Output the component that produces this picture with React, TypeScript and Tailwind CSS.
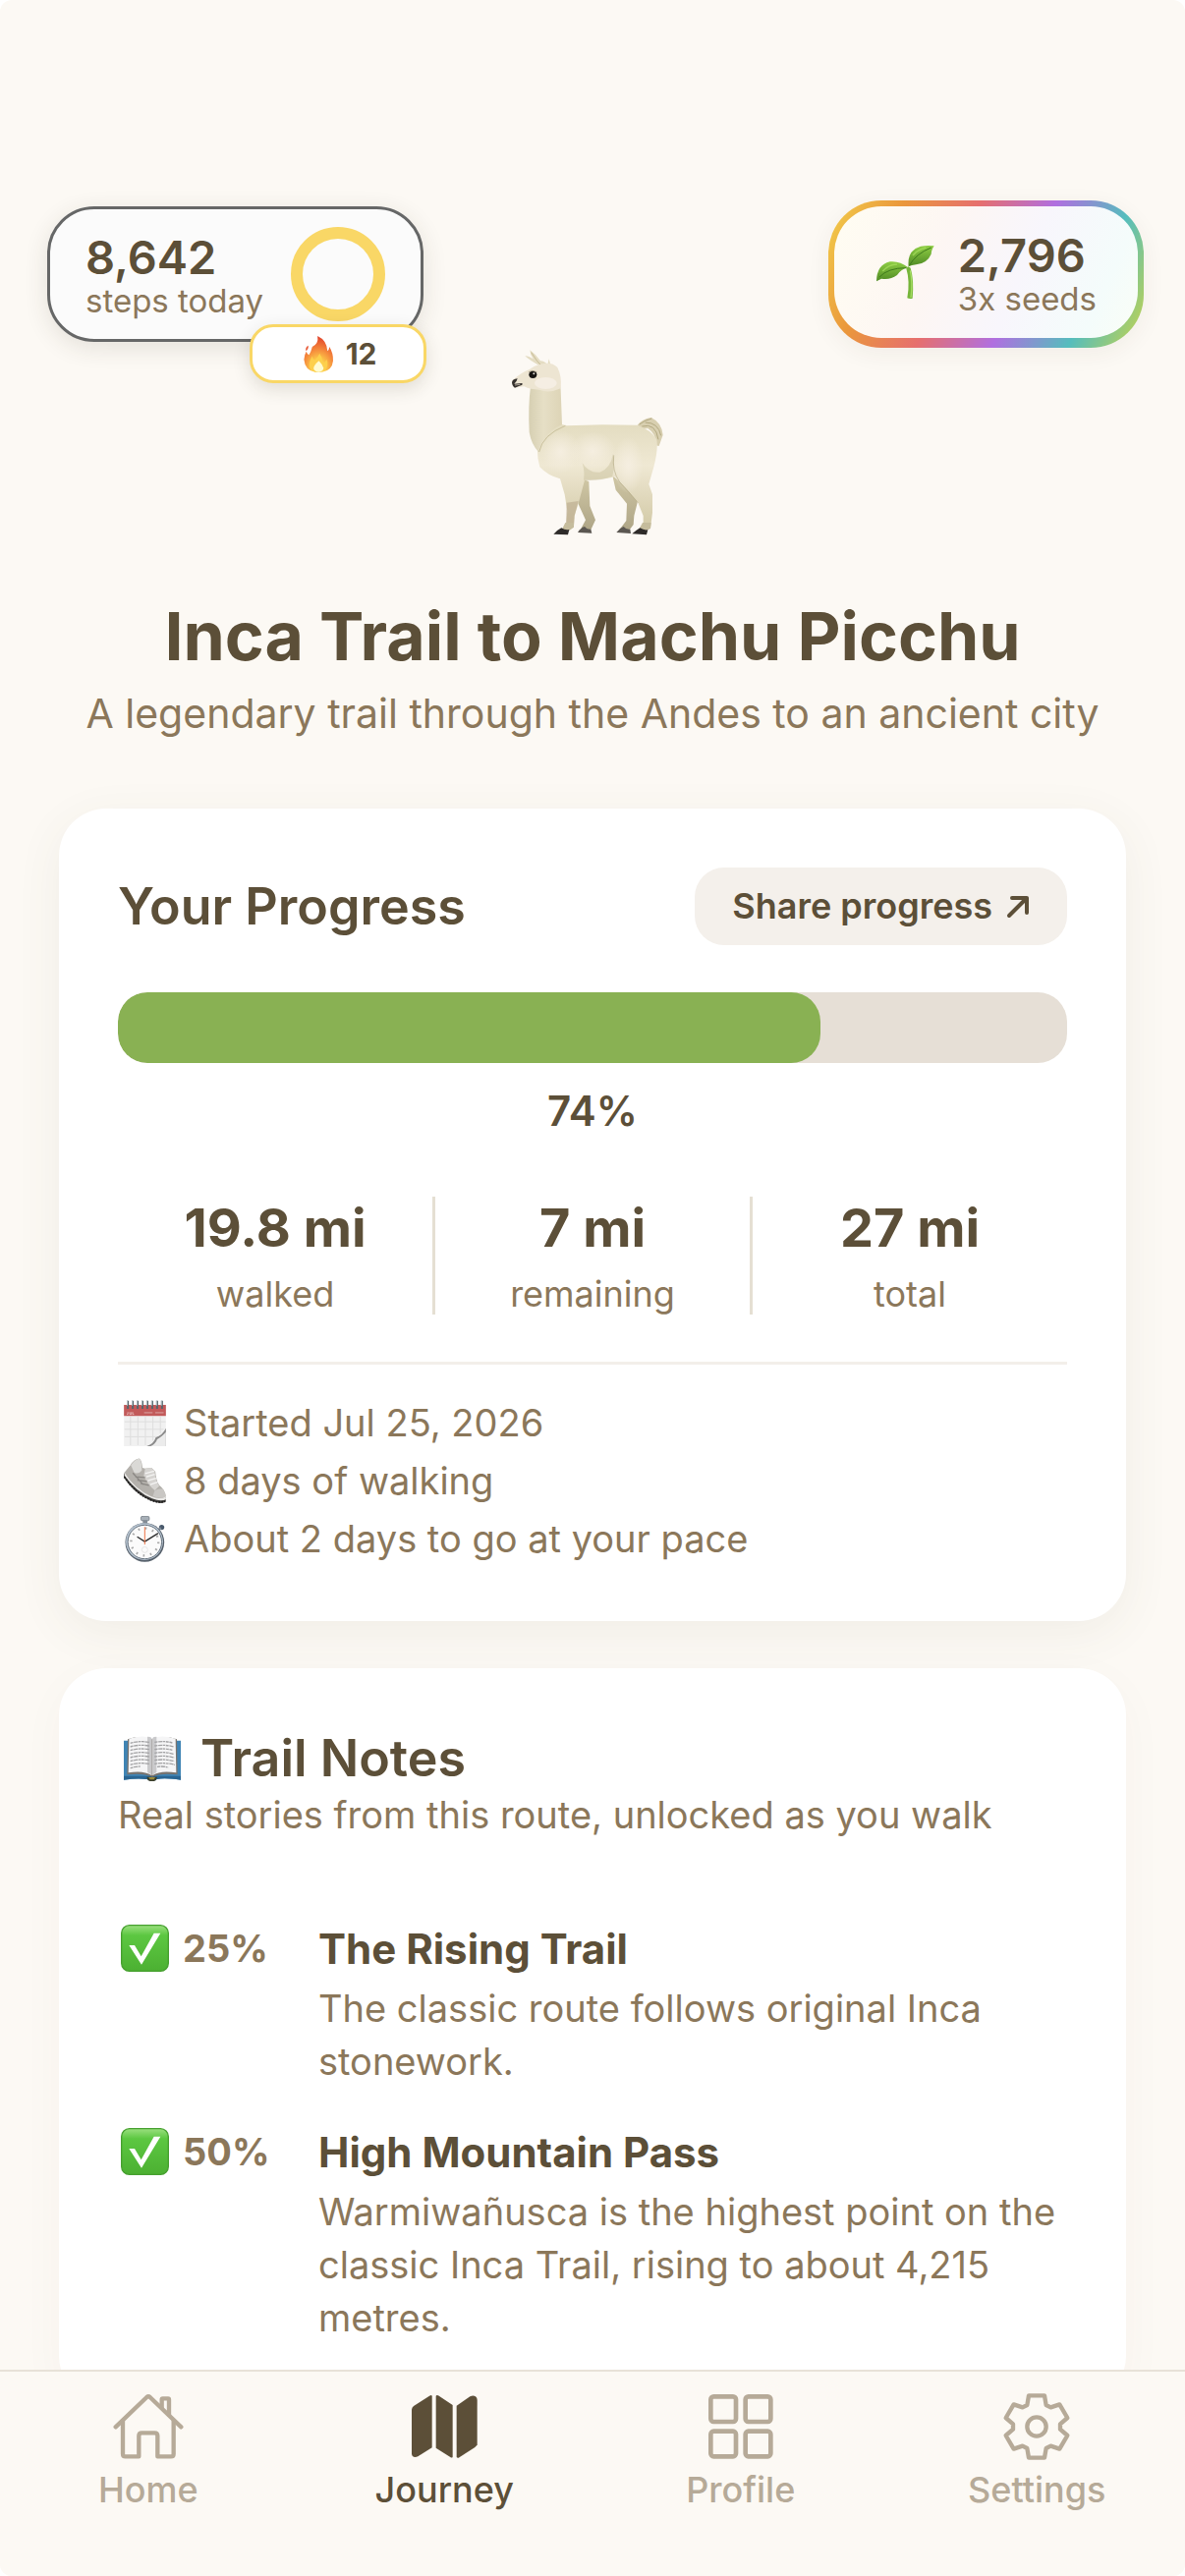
import type { ReactNode } from "react"

function Llama() {
  return (
    <svg width="166" height="193" viewBox="120 72 498 579" role="img" aria-label="Llama">
      <defs>
        <linearGradient id="llamaBody" x1="0" y1="0" x2="0" y2="1">
          <stop offset="0" stopColor="#e3dcc0" />
          <stop offset="0.4" stopColor="#efe8d3" />
          <stop offset="1" stopColor="#d2c9a6" />
        </linearGradient>
        <linearGradient id="llamaNeck" x1="0" y1="0" x2="1" y2="0">
          <stop offset="0" stopColor="#d6cfb2" />
          <stop offset="0.45" stopColor="#e6dfc6" />
          <stop offset="1" stopColor="#ddd4b6" />
        </linearGradient>
        <linearGradient id="llamaLeg" x1="0" y1="0" x2="0" y2="1">
          <stop offset="0" stopColor="#d0c7a5" />
          <stop offset="1" stopColor="#aea586" />
        </linearGradient>
        <radialGradient id="llamaGlow">
          <stop offset="0" stopColor="#f5eee0" />
          <stop offset="1" stopColor="#f5eee0" stopOpacity="0" />
        </radialGradient>
      </defs>
      {/* far legs */}
      <path d="M330 470 L358 480 L361 555 L378 598 L364 628 L334 624 L348 598 L324 545Z" fill="url(#llamaLeg)" />
      <path d="M430 462 L500 520 L506 545 L496 585 L494 612 L482 628 L452 626 L472 600 L474 548 L440 506Z" fill="url(#llamaLeg)" />
      <path d="M324 636 Q332 622 345 618 Q352 628 364 626 L367 638Z" fill="#5b5751" />
      <path d="M442 636 Q452 622 464 618 Q472 628 484 626 L486 639Z" fill="#5b5751" />
      {/* tail */}
      <path d="M506 308 Q520 290 548 285 Q580 300 584 338 L572 372 L562 370 Q566 336 538 318 L520 320Z" fill="#d8cfb0" />
      <path d="M512 306 Q530 292 550 288 M520 312 Q562 300 570 352 M530 300 Q570 300 578 340" stroke="#b3a981" strokeWidth="3" fill="none" />
      {/* body */}
      <path
        d="M262 302 L290 310 L400 307 L505 308 Q548 322 565 352 Q570 382 556 436 L541 488 L552 520 L552 575 L546 622 L524 620 L524 585 L508 545 L470 500 L438 466 Q398 476 345 476 L328 540 L314 585 L312 616 L288 622 L292 570 L284 520 L270 472 Q232 462 208 436 Q196 396 204 352 Q226 316 262 302Z"
        fill="url(#llamaBody)"
      />
      <ellipse cx="370" cy="388" rx="70" ry="60" fill="url(#llamaGlow)" />
      <ellipse cx="478" cy="430" rx="46" ry="86" fill="url(#llamaGlow)" />
      <ellipse cx="272" cy="390" rx="60" ry="66" fill="url(#llamaGlow)" />
      <path d="M338 424 Q346 450 342 476 Q392 480 430 464 Q438 430 432 396 Q424 440 392 452 Q358 456 338 424Z" fill="#bdb48d" opacity="0.35" />
      <path d="M434 400 Q428 448 452 482 Q480 512 508 545" stroke="#aaa078" strokeWidth="3" fill="none" opacity="0.5" />
      <path d="M290 545 L326 540 L314 585 L312 616 L288 622Z" fill="#b9a98c" opacity="0.6" />
      {/* neck */}
      <path d="M180 190 Q172 250 176 330 Q182 366 204 390 Q214 336 276 306 L272 200 L266 150Z" fill="url(#llamaNeck)" />
      <path d="M206 390 Q216 338 286 310" stroke="#c9c09c" strokeWidth="3" fill="none" />
      {/* ears */}
      <path d="M206 126 Q174 108 163 97 Q172 96 188 106 Q178 92 178 79 Q196 92 210 112 Q222 112 232 124 L236 106 L242 128 L236 146Z" fill="#e4dcc2" />
      <path d="M182 86 Q196 112 224 138" stroke="#c8bd96" strokeWidth="3" fill="none" />
      {/* head */}
      <path d="M192 128 Q240 108 262 132 Q276 160 272 196 Q238 212 205 200 Q180 200 160 190 L130 194 Q120 184 124 172 Q150 148 176 138Z" fill="#ede5d2" />
      <ellipse cx="226" cy="180" rx="34" ry="18" fill="#f5eee3" />
      <path d="M123 178 Q124 168 140 166 Q138 176 130 182 L154 180 Q158 186 146 188 L132 194 Q124 190 123 178Z" fill="#35312e" />
      <path d="M132 186 L148 184" stroke="#a89f92" strokeWidth="3" />
      <ellipse cx="187" cy="154" rx="12" ry="11" fill="#151311" />
      <circle cx="190" cy="151" r="3" fill="#ddd8d0" />
      <path d="M174 146 Q184 138 199 146" stroke="#8d846b" strokeWidth="2" fill="none" />
      {/* near hooves */}
      <path d="M286 606 L312 606 L312 620 L298 630 L276 626Z M522 606 L548 606 L546 624 L534 630 L512 624Z" fill="#c5bc9c" />
      <path d="M250 641 Q262 628 274 622 Q286 630 298 627 L294 643Z M490 640 Q504 628 514 622 Q526 630 538 628 L534 643Z" fill="#2e2b29" />
    </svg>
  )
}

function Flame() {
  return (
    <svg width="35" height="39" viewBox="820 452 104 116" aria-hidden="true">
      <defs>
        <radialGradient id="flame" cx="0.5" cy="0.88" r="0.85">
          <stop offset="0" stopColor="#fff27a" />
          <stop offset="0.3" stopColor="#fcc648" />
          <stop offset="0.6" stopColor="#f58a3c" />
          <stop offset="1" stopColor="#e2452c" />
        </radialGradient>
      </defs>
      <path
        d="M874 455 Q902 468 904 500 Q909 498 910 488 Q922 508 921 530 Q918 560 888 564 L866 564 Q836 558 833 526 Q834 512 840 502 Q842 510 848 512 Q854 504 858 488 Q878 478 874 455Z"
        fill="url(#flame)"
      />
      <path d="M846 484 Q836 490 839 500 Q847 496 846 484Z" fill="#e85a38" />
      <path d="M880 508 Q876 520 866 528 Q858 524 858 516 Q846 536 850 550 Q856 564 876 564 Q900 562 904 544 Q905 534 902 526 Q896 536 890 536 Q888 518 880 508Z" fill="#fdd04c" />
      <path d="M878 530 Q862 544 862 554 Q866 564 878 564 Q892 562 892 552 Q890 542 878 530Z" fill="#fffbd0" />
    </svg>
  )
}

function Sprout() {
  return (
    <svg width="60" height="56" viewBox="218 183 180 168" role="img" aria-label="Seedling">
      <defs>
        <linearGradient id="leaf" x1="0" y1="0" x2="0" y2="1">
          <stop offset="0" stopColor="#8fce45" />
          <stop offset="1" stopColor="#4f8a24" />
        </linearGradient>
      </defs>
      <path d="M318 250 L325 254 Q336 290 331 347 Q322 350 315 346 Q324 296 312 256Z" fill="#76b53a" />
      <path d="M324 262 Q332 300 326 345" stroke="#a5dd62" strokeWidth="4" fill="none" />
      <path d="M221 295 Q222 244 262 235 Q292 232 318 253 Q296 258 284 276 Q262 292 236 287Z" fill="url(#leaf)" />
      <path d="M319 250 Q314 200 356 188 Q378 184 397 187 Q388 200 388 212 Q376 240 342 244 Q328 246 319 250Z" fill="url(#leaf)" />
      <path d="M230 282 Q256 254 312 254 M322 246 Q340 212 388 192" stroke="#3f7a1c" strokeWidth="3" fill="none" />
      <path d="M240 264 Q258 244 284 243 M332 216 Q346 198 372 192" stroke="#a9e060" strokeWidth="5" fill="none" opacity="0.7" />
    </svg>
  )
}

function Calendar() {
  return (
    <svg width="43" height="47" viewBox="78 41 129 142" aria-hidden="true">
      <rect x="78" y="56" width="129" height="127" fill="#f1f1f1" />
      <rect x="78" y="56" width="129" height="34" fill="#c25a5a" />
      <path d="M90 78 v7 h-3 M96 78 v7 h5 v-7 M105 78 v7 h4" stroke="#f0d8d8" strokeWidth="2" fill="none" />
      <path d="M140 80 h26 M174 80 h26" stroke="#d08584" strokeWidth="5" />
      <path d="M98 92 V180 M121 92 V180 M144 92 V180 M167 92 V166 M190 92 V144 M80 108 H206 M80 131 H200 M80 154 H176" stroke="#dedede" strokeWidth="3" />
      <path d="M207 128 Q196 150 176 156 Q170 176 148 183 H207Z" fill="#8a8a8a" />
      <path d="M207 140 Q192 156 180 162 Q176 176 160 183 H207Z" fill="#ececec" />
      <path d="M90 43 V68 M105 43 V68 M120 43 V68 M135 43 V68 M150 43 V68 M165 43 V68 M180 43 V68 M195 43 V68" stroke="#58666c" strokeWidth="6" />
      <path d="M88 42 V58 M103 42 V58 M118 42 V58 M133 42 V58 M148 42 V58 M163 42 V58 M178 42 V58 M193 42 V58" stroke="#c3ced2" strokeWidth="3" />
    </svg>
  )
}

function Shoe() {
  return (
    <svg width="43" height="47" viewBox="76 218 131 142" aria-hidden="true">
      <path d="M76 264 L76 278 Q110 328 160 350 Q190 362 206 354 L207 340Z" fill="#3f3e3c" />
      <path d="M77 260 L78 272 Q116 324 164 343 Q190 354 207 346 L206 330Z" fill="#e9e8e6" />
      <path d="M78 262 L96 240 Q106 222 124 219 Q132 224 134 248 L142 250 L162 248 L174 260 Q176 288 186 302 Q204 316 206 336 Q190 348 160 336 Q108 312 78 262Z" fill="#b4b1ac" />
      <path d="M98 240 Q108 224 124 219 Q132 228 132 256 Q120 270 108 262Z" fill="#dad9d6" />
      <path d="M142 250 L162 248 L172 260 Q174 290 186 304 L172 318 Q150 300 138 272Z" fill="#d6d4d1" />
      <path d="M172 318 Q188 312 198 314 Q206 326 206 338 Q190 346 166 336Z" fill="#c9c7c4" />
      <path d="M142 266 L170 258 M146 276 L172 268 M150 288 L176 280 M158 300 L182 292" stroke="#f4f4f3" strokeWidth="4" />
      <path d="M112 276 L142 278 M118 286 L148 290 M128 296 L154 302 M104 264 L136 300" stroke="#8b8884" strokeWidth="4" />
      <path d="M78 276 Q112 328 160 348 Q184 358 204 352" stroke="#1f1e1d" strokeWidth="5" strokeDasharray="5 4" fill="none" />
    </svg>
  )
}

function Stopwatch() {
  return (
    <svg width="43" height="47" viewBox="78 396 129 142" aria-hidden="true">
      <rect x="130" y="397" width="26" height="14" rx="5" fill="#a8b0b8" stroke="#636c75" strokeWidth="2" />
      <rect x="136" y="409" width="14" height="12" fill="#838c95" />
      <circle cx="194" cy="431" r="8" fill="#4a5a6c" />
      <path d="M180 442 L192 433" stroke="#7f8b98" strokeWidth="7" />
      <circle cx="142" cy="477" r="60" fill="#56606b" />
      <circle cx="141" cy="475" r="57" fill="#b9c6d3" />
      <circle cx="142" cy="476" r="52" fill="#fbfbfb" stroke="#66727e" strokeWidth="3" />
      <circle cx="142" cy="476" r="42" fill="none" stroke="#a9a9a9" strokeWidth="7" strokeDasharray="5 17" />
      <circle cx="142" cy="500" r="9" fill="none" stroke="#dcdcdc" strokeWidth="2" />
      <path d="M142 475 L120 461 M142 475 L182 450" stroke="#2c2c2c" strokeWidth="4" strokeLinecap="round" />
      <path d="M142 430 V484" stroke="#ec7245" strokeWidth="3" />
    </svg>
  )
}

function Book() {
  return (
    <svg width="58" height="46" viewBox="78 78 174 138" aria-hidden="true">
      <path d="M78 92 H252 V212 Q200 204 180 210 Q164 220 148 210 Q120 206 78 212Z" fill="#3f84b4" />
      <path d="M78 200 H252 V212 Q200 205 180 210 H148 Q120 206 78 212Z" fill="#2a6592" />
      <path d="M148 203 H180 Q178 217 164 217 Q150 217 148 203Z" fill="#3b3f2c" />
      <path d="M154 204 H174 L170 211 H158Z" fill="#9a8a3a" />
      <path d="M88 196 L90 88 Q128 74 164 88 Q200 74 240 88 L242 196 Q190 190 165 203 Q138 190 88 196Z" fill="#77736f" />
      <path d="M92 190 L94 86 Q136 74 163 84 V198 Q138 182 92 190Z" fill="#f5f5f6" />
      <path d="M238 190 L236 86 Q196 74 166 84 V198 Q190 182 238 190Z" fill="#f5f5f6" />
      <path d="M150 80 Q160 80 163 84 V198 Q158 192 150 189Z M178 80 Q168 80 166 84 V198 Q172 192 178 189Z" fill="#c9c9cb" />
      <path
        d="M98 100 Q124 92 156 97 M98 111 Q124 103 156 108 M98 122 Q124 114 156 119 M98 133 Q124 125 156 130 M98 144 Q124 136 156 141 M98 155 Q124 147 156 152 M98 166 Q124 158 156 163 M98 176 Q112 171 128 171 M172 97 Q204 92 226 99 M172 108 Q204 103 230 111 M172 119 Q204 114 226 121 M172 130 Q204 125 230 133 M172 141 Q204 136 232 144 M172 152 Q204 147 232 155 M172 163 Q204 158 234 166 M180 172 Q196 169 214 174"
        stroke="#a2a2a4"
        strokeWidth="4"
        strokeDasharray="9 2 13 2 6 2"
        fill="none"
      />
    </svg>
  )
}

function Check() {
  return (
    <svg width="49" height="48" viewBox="69 657 147 144" role="img" aria-label="Unlocked">
      <defs>
        <linearGradient id="checkBg" x1="0" y1="0" x2="0" y2="1">
          <stop offset="0" stopColor="#9be07f" />
          <stop offset="0.22" stopColor="#5cc741" />
          <stop offset="1" stopColor="#4cb032" />
        </linearGradient>
      </defs>
      <rect x="71" y="659" width="143" height="140" rx="24" fill="url(#checkBg)" stroke="#46a02f" strokeWidth="4" />
      <path d="M94 720 H111 L131 754 L170 683 H190 L132 779Z" fill="#fff" />
    </svg>
  )
}

function HomeIcon() {
  return (
    <svg width="72" height="72" viewBox="44 42 216 216" fill="none" stroke="currentColor" strokeWidth="13" strokeLinecap="round" strokeLinejoin="round" aria-hidden="true">
      <path d="M52 151 L147 60 Q152 56 157 60 L252 151" />
      <path d="M74 133 V233 Q74 241 82 241 H123 V178 Q123 169 132 169 H171 Q180 169 180 178 V241 H221 Q229 241 229 233 V133" />
      <path d="M193 92 V67 Q193 64 196 64 H212 Q215 64 215 67 V114" />
    </svg>
  )
}

function MapIcon() {
  return (
    <svg width="72" height="72" viewBox="949 42 216 216" fill="currentColor" aria-hidden="true">
      <path d="M958 98 Q958 92 964 87 L1012 56 Q1020 51 1020 58 V214 L977 241 Q966 246 960 239 Q958 236 958 232Z" />
      <path d="M1032 56 Q1034 52 1039 55 L1083 84 V243 Q1080 246 1076 243 L1032 215Z" />
      <path d="M1095 86 L1136 58 Q1146 53 1153 58 Q1158 62 1158 68 V205 Q1156 209 1151 213 L1101 245 Q1097 246 1095 243Z" />
    </svg>
  )
}

function GridIcon() {
  return (
    <svg width="72" height="72" viewBox="53 42 216 216" fill="none" stroke="currentColor" strokeWidth="14" aria-hidden="true">
      <rect x="69" y="58" width="77" height="77" rx="9" />
      <rect x="175" y="58" width="77" height="77" rx="9" />
      <rect x="69" y="164" width="77" height="77" rx="9" />
      <rect x="175" y="164" width="77" height="77" rx="9" />
    </svg>
  )
}

function GearIcon() {
  return (
    <svg width="72" height="72" viewBox="-108 -108 216 216" fill="none" stroke="currentColor" strokeWidth="13" strokeLinejoin="round" aria-hidden="true">
      <path d="M-24 -95 L24 -95 L29 -66 L43 -59 L70 -68 L94 -27 L72 -8 L72 8 L94 27 L70 68 L43 59 L29 66 L24 95 L-24 95 L-29 66 L-43 59 L-70 68 L-94 27 L-72 8 L-72 -8 L-94 -27 L-70 -68 L-43 -59 L-29 -66Z" />
      <circle r="29" />
    </svg>
  )
}

function Stat({ value, label }: { value: string; label: string }) {
  return (
    <div className="flex flex-1 flex-col items-center">
      <dd className="text-[54px] leading-[64px] font-bold">{value}</dd>
      <dt className="order-last mt-[14px] text-[36px] leading-[42px] text-[#8b775a]">{label}</dt>
    </div>
  )
}

function Fact({ icon, children }: { icon: ReactNode; children: ReactNode }) {
  return (
    <li className="flex items-center gap-[18px] pl-[6px] text-[38px] leading-[59px] text-[#8b775a]">
      {icon}
      <span>{children}</span>
    </li>
  )
}

function Note({ percent, title, children }: { percent: string; title: string; children: ReactNode }) {
  return (
    <li className="flex items-start">
      <div className="flex w-[204px] shrink-0 items-center gap-[14px] pl-[3px]">
        <Check />
        <span className="text-[38px] leading-[48px] font-bold text-[#8b775a]">{percent}</span>
      </div>
      <div>
        <h3 className="text-[42px] leading-[50px] font-bold">{title}</h3>
        <p className="mt-2 text-[38px] leading-[54px] text-[#8b775a]">{children}</p>
      </div>
    </li>
  )
}

function Tab({ icon, label, active }: { icon: ReactNode; label: string; active?: boolean }) {
  return (
    <a
      href="#"
      aria-current={active ? "page" : undefined}
      className={`flex flex-1 flex-col items-center gap-[7px] text-[36px] leading-[42px] font-medium ${active ? "text-[#5c4f38]" : "text-[#b6aa98]"}`}
    >
      {icon}
      {label}
    </a>
  )
}

export default function App() {
  return (
    <div className="flex h-screen flex-col overflow-hidden rounded-xl bg-[#fcf9f4] font-[Inter,'Liberation_Sans',sans-serif] text-[#5c4f38]">
      <main className="min-h-0 flex-1 overflow-y-auto [scrollbar-width:none]">
        <header className="flex items-center justify-between pt-[204px] pr-[42px] pl-12">
          <div className="relative flex items-center gap-7 rounded-[48px] border-3 border-[#666767] bg-[#fbfbfb] px-9 py-[18px] shadow-[0_6px_24px_rgba(60,50,30,0.12)]">
            <div>
              <div className="text-[47px] leading-[54px] font-semibold">8,642</div>
              <div className="text-[33px] leading-[34px] text-[#8b775a]">steps today</div>
            </div>
            <div className="h-24 w-24 rounded-full border-12 border-[#f9d766]" />
            <div className="absolute -right-[6px] -bottom-[45px] flex h-[60px] w-[180px] items-center justify-center gap-3 rounded-3xl border-3 border-[#f9d766] bg-white text-[30px] font-bold shadow-[0_6px_18px_rgba(60,50,30,0.14)]">
              <Flame />
              12
            </div>
          </div>

          <div className="rounded-[54px] bg-[linear-gradient(114deg,#f2cf4a,#ea973c_20%,#e66f6e_40%,#b06fe0_60%,#55bdbd_80%,#c8d448)] p-[6px] pb-[10px] shadow-[0_6px_24px_rgba(60,50,30,0.06)]">
            <div className="flex h-[134px] items-center gap-6 rounded-[48px] bg-[linear-gradient(114deg,#fffdf2,#fdf6f3_35%,#f8f6fc_60%,#f4fcfb_85%,#fafdf6)] px-[42px]">
              <Sprout />
              <div>
                <div className="text-[47px] leading-[54px] font-semibold">2,796</div>
                <div className="text-[33px] leading-[34px] text-[#8b775a]">3x seeds</div>
              </div>
            </div>
          </div>
        </header>

        <div className="flex flex-col items-center px-10 text-center">
          <Llama />
          <h1 className="mt-[58px] text-[68px] leading-[84px] font-bold">Inca Trail to Machu Picchu</h1>
          <p className="mt-3 text-[41px] leading-[50px] text-[#8b775a]">A legendary trail through the Andes to an ancient city</p>
        </div>

        <section className="mx-15 mt-18 rounded-[48px] bg-white p-15 pb-[54px] shadow-[0_12px_48px_rgba(92,79,56,0.07)]">
          <div className="flex items-center justify-between">
            <h2 className="text-[52px] leading-[64px] font-semibold">Your Progress</h2>
            <button className="flex items-center gap-[14px] rounded-[30px] bg-[#f4f0eb] px-[38px] py-[18px] text-[36px] leading-[43px] font-semibold">
              Share progress
              <svg width="24" height="24" viewBox="0 0 24 24" fill="none" stroke="currentColor" strokeWidth="4" strokeLinecap="round" strokeLinejoin="round" aria-hidden="true">
                <path d="M3 21 L21 3 M6 3 H21 V18" />
              </svg>
            </button>
          </div>

          <div role="progressbar" aria-label="Trail progress" aria-valuenow={74} className="mt-12 h-18 overflow-hidden rounded-[30px] bg-[#e6dfd6]">
            <div className="h-full w-[74%] rounded-[30px] bg-[#89b153]" />
          </div>
          <p className="mt-6 text-center text-[42px] leading-[50px] font-semibold">74%</p>

          <dl className="mt-[62px] flex divide-x-3 divide-[#e5dfd3]">
            <Stat value="19.8 mi" label="walked" />
            <Stat value="7 mi" label="remaining" />
            <Stat value="27 mi" label="total" />
          </dl>

          <ul className="mt-12 border-t-3 border-[#f3efea] pt-[30px]">
            <Fact icon={<Calendar />}>Started Jul 25, 2026</Fact>
            <Fact icon={<Shoe />}>8 days of walking</Fact>
            <Fact icon={<Stopwatch />}>About 2 days to go at your pace</Fact>
          </ul>
        </section>

        <section className="mx-15 mt-12 rounded-[48px] bg-white p-15 shadow-[0_12px_48px_rgba(92,79,56,0.03)]">
          <h2 className="flex items-center gap-5 pl-[6px] text-[52px] leading-[64px] font-semibold">
            <Book />
            Trail Notes
          </h2>
          <p className="mt-[2px] text-[38px] leading-[47px] text-[#8b775a]">Real stories from this route, unlocked as you walk</p>

          <ul className="mt-[88px] flex flex-col gap-[41px]">
            <Note percent="25%" title="The Rising Trail">
              The classic route follows original Inca stonework.
            </Note>
            <Note percent="50%" title="High Mountain Pass">
              Warmiwañusca is the highest point on the classic Inca Trail, rising to about 4,215 metres.
            </Note>
          </ul>
        </section>
      </main>

      <nav className="relative flex border-t-2 border-[#e8e2d8] bg-[#fcf9f4] pt-5 pb-[67px]">
        <Tab icon={<HomeIcon />} label="Home" />
        <Tab icon={<MapIcon />} label="Journey" active />
        <Tab icon={<GridIcon />} label="Profile" />
        <Tab icon={<GearIcon />} label="Settings" />
      </nav>
    </div>
  )
}
